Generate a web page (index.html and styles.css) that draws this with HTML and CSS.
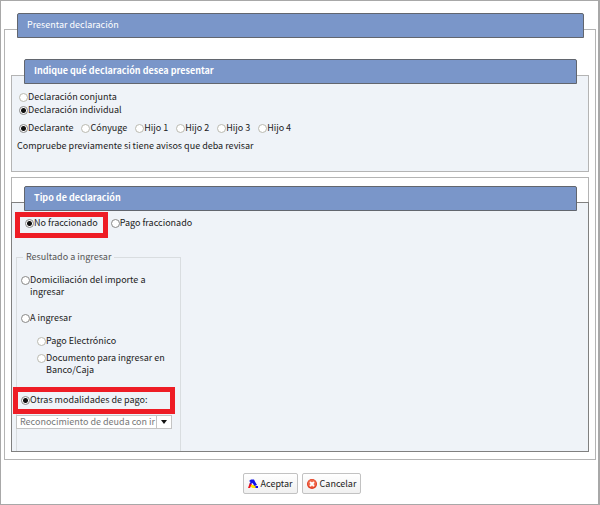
FILE: index.html
```html
<!DOCTYPE html>
<html lang="es">
<head>
<meta charset="utf-8">
<title>Presentar declaración</title>
<link rel="stylesheet" href="styles.css">
</head>
<body>
<form class="dialog">
  <fieldset class="group">
    <legend class="bar bar-main">Presentar declaración</legend>
    <div class="frame frame-main">

      <fieldset class="group">
        <legend class="bar bar-section">Indique qué declaración desea presentar</legend>
        <div class="frame frame-section">
          <div class="kind">
            <label class="choice off"><input type="radio" name="kind">Declaración conjunta</label>
            <label class="choice"><input type="radio" name="kind" checked>Declaración individual</label>
          </div>
          <div class="people">
            <label class="choice"><input type="radio" name="person" checked>Declarante</label>
            <label class="choice off"><input type="radio" name="person">Cónyuge</label>
            <label class="choice off"><input type="radio" name="person">Hijo 1</label>
            <label class="choice off"><input type="radio" name="person">Hijo 2</label>
            <label class="choice off"><input type="radio" name="person">Hijo 3</label>
            <label class="choice off"><input type="radio" name="person">Hijo 4</label>
          </div>
          <p class="note">Compruebe previamente si tiene avisos que deba revisar</p>
        </div>
      </fieldset>

      <div class="outline">
        <fieldset class="group">
          <legend class="bar bar-section">Tipo de declaración</legend>
          <div class="frame frame-type">
            <div class="split">
              <label class="choice marked marked-split"><input type="radio" name="split" checked>No fraccionado</label>
              <label class="choice"><input type="radio" name="split">Pago fraccionado</label>
            </div>
            <fieldset class="result">
              <legend>Resultado a ingresar</legend>
              <label class="choice"><input type="radio" name="pay"><span class="narrow">Domiciliación del importe a ingresar</span></label>
              <label class="choice"><input type="radio" name="pay">A ingresar</label>
              <div class="nested">
                <label class="choice off"><input type="radio" name="how">Pago Electrónico</label>
                <label class="choice off"><input type="radio" name="how">Documento para ingresar en Banco/Caja</label>
              </div>
              <label class="choice marked marked-pay"><input type="radio" name="pay" checked>Otras modalidades de pago:</label>
              <div class="picker">
                <select aria-label="Otras modalidades de pago">
                  <option>Reconocimiento de deuda con ir</option>
                </select>
                <svg class="arrow" viewBox="0 0 6 4" aria-hidden="true"><path d="M0 0h6L3 4z"/></svg>
              </div>
            </fieldset>
          </div>
        </fieldset>
      </div>
    </div>
  </fieldset>

  <div class="actions">
    <button type="button">
      <svg viewBox="0 0 20 20" aria-hidden="true">
        <path fill="#e8141c" d="M4 7l4 3-4 8H0z"/>
        <path fill="#ffe600" d="M6 12l5 0 4 1 5 5H9l-3-2z"/>
        <path fill="#1010e8" d="M2 4l4-3h6l3 6 3 5-5 2-4-6-6 3 2-5z"/>
        <path fill="#1010e8" d="M15 14h5v4h-5z"/>
      </svg>Aceptar</button>
    <button type="button">
      <svg viewBox="0 0 20 20" aria-hidden="true">
        <circle cx="10" cy="10" r="10" fill="#e03a20"/>
        <circle cx="10" cy="9" r="8" fill="#f0694a"/>
        <path d="M7 7l6 6M13 7l-6 6" stroke="#fff" stroke-width="3.6" stroke-linecap="round"/>
      </svg>Cancelar</button>
  </div>
</form>
</body>
</html>
```
FILE: styles.css
```css
* {
  box-sizing: border-box;
}

body {
  margin: 0;
  background: #a8a8a8;
  color: #222;
  font: 9px/12px "Noto Sans CJK SC", "Noto Sans", sans-serif;
}

.dialog {
  margin: 1px 2px 1px 1px;
  padding: 12px 2px 10px 3px;
  background: #fff;
}

fieldset {
  min-width: 0;
  margin: 0;
  padding: 0;
  border: 0;
}

legend {
  padding: 0;
}

.bar {
  position: relative;
  z-index: 1;
  width: calc(100% - 25px);
  height: 25px;
  margin: 0 12px 0 13px;
  padding: 0 9px;
  border: 1px solid #62666e;
  border-radius: 2px 2px 0 0;
  background: #7a96c9;
  color: #fff;
  line-height: 22px;
}

.bar-section {
  font-weight: bold;
}

.frame {
  margin-top: -9px;
  border: 1px solid #b4b4b4;
}

.frame-main {
  padding: 29px 6px 7px;
}

.frame-section {
  min-height: 97px;
  padding: 15px 7px 0;
  background: #eff3f8;
}

.outline {
  margin-top: 5px;
  padding-top: 8px;
  border: 1px solid #b4b4b4;
  border-bottom: 0;
}

.outline > .group {
  margin: 0 -1px;
}

.frame-type {
  padding: 14px 4px 0;
  border-color: #808080;
  background: #eff3f8;
}

.choice {
  display: flex;
  align-items: flex-start;
}

input {
  flex: none;
  appearance: none;
  width: 9px;
  height: 9px;
  margin: 2px 0 0;
  border: 1px solid #888;
  border-radius: 50%;
  background: #fff;
}

.off input {
  border-color: #b9b9b0;
}

input:checked {
  background: radial-gradient(circle, #111 0 2px, #fff 3px);
}

.kind,
.people,
.note {
  margin: 0 0 6px;
}

.kind {
  display: grid;
  gap: 1px;
}

.people {
  display: flex;
  gap: 8px;
}

.note {
  margin-left: -2px;
}

.split {
  display: flex;
  gap: 13px;
  padding-left: 9px;
}

.marked {
  position: relative;
}

.marked::after {
  content: "";
  position: absolute;
  border: 5px solid #ee1c25;
}

.marked-split::after {
  inset: -5px -10px -9px -10px;
}

.marked-pay::after {
  inset: -7px 5px -8px -8px;
}

.result {
  width: 165px;
  margin-top: 22px;
  padding: 11px 0 22px 4px;
  border: 1px solid #d9dde0;
  border-bottom: 0;
}

.result legend {
  margin-left: 2px;
  padding: 0 3px;
  color: #555;
}

.result .choice + .choice {
  margin-top: 14px;
}

.narrow {
  max-width: 124px;
}

.nested {
  display: grid;
  gap: 5px;
  padding: 11px 8px 0 16px;
}

.nested .choice + .choice {
  margin-top: 0;
}

.nested + .choice {
  margin-top: 18px;
}

.picker {
  display: grid;
  grid-template-columns: 1fr 15px;
  margin: 9px 8px 0 -5px;
  border: 1px solid #c4c4c4;
  background: #fff;
}

.picker select {
  grid-area: 1 / 1 / 2 / 3;
  appearance: none;
  width: 100%;
  height: 12px;
  padding: 0 15px 0 3px;
  border: 0;
  background: transparent;
  color: #777;
  font: inherit;
}

.arrow {
  grid-area: 1 / 2;
  width: 15px;
  height: 12px;
  padding: 4px;
  border-left: 1px solid #c4c4c4;
  fill: #111;
  pointer-events: none;
}

.actions {
  display: flex;
  justify-content: center;
  gap: 4px;
  padding: 13px 0 0 4px;
}

button {
  display: flex;
  align-items: center;
  gap: 3px;
  height: 21px;
  padding: 0 4px;
  border: 1px solid #c2c2c2;
  border-radius: 2px;
  background: linear-gradient(#fff, #f0f0f0);
  color: #222;
  font: inherit;
}

button svg {
  width: 10px;
  height: 10px;
}
```
